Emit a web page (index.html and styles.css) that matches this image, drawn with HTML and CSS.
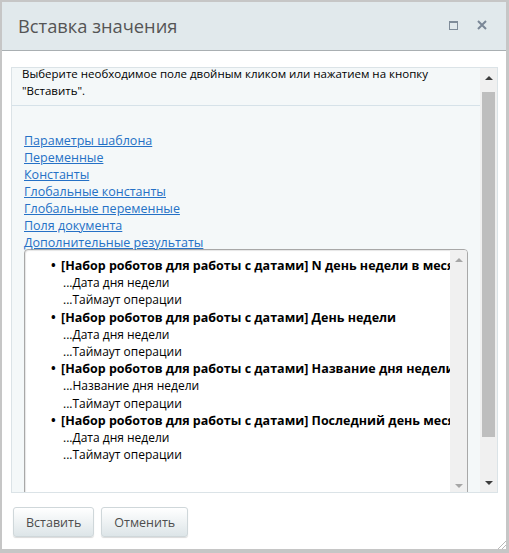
FILE: index.html
```html
<!DOCTYPE html>
<html lang="ru">
<head>
    <meta charset="UTF-8">
    <title>Вставка значения</title>
    <link rel="stylesheet" href="styles.css">
</head>
<body>
    <div class="dialog">
        <div class="dialog-head">
            <span class="dialog-title">Вставка значения</span>
            <span class="head-icons">
                <span class="icon-max"></span>
                <svg class="icon-close" width="10" height="10" viewBox="0 0 10 10">
                    <path d="M1 1 L9 9 M9 1 L1 9" stroke="#7a8797" stroke-width="2"/>
                </svg>
            </span>
        </div>

        <div class="dialog-body">
            <div class="panel">
                <div class="panel-content">
                    <div class="hint">Выберите необходимое поле двойным кликом или нажатием на кнопку "Вставить".</div>

                    <div class="links">
                        <a href="#">Параметры шаблона</a>
                        <a href="#">Переменные</a>
                        <a href="#">Константы</a>
                        <a href="#">Глобальные константы</a>
                        <a href="#">Глобальные переменные</a>
                        <a href="#">Поля документа</a>
                        <a href="#">Дополнительные результаты</a>
                    </div>

                    <div class="field-box">
                        <ul class="field-list">
                            <li>
                                <div class="group">[Набор роботов для работы с датами] N день недели в месяце</div>
                                <div class="field">...Дата дня недели</div>
                                <div class="field">...Таймаут операции</div>
                            </li>
                            <li>
                                <div class="group">[Набор роботов для работы с датами] День недели</div>
                                <div class="field">...Дата дня недели</div>
                                <div class="field">...Таймаут операции</div>
                            </li>
                            <li>
                                <div class="group">[Набор роботов для работы с датами] Название дня недели</div>
                                <div class="field">...Название дня недели</div>
                                <div class="field">...Таймаут операции</div>
                            </li>
                            <li>
                                <div class="group">[Набор роботов для работы с датами] Последний день месяца</div>
                                <div class="field">...Дата дня недели</div>
                                <div class="field">...Таймаут операции</div>
                            </li>
                        </ul>
                        <div class="scrollbar light">
                            <span class="arrow up"></span>
                            <span class="arrow down"></span>
                        </div>
                    </div>
                </div>
                <div class="scrollbar">
                    <span class="arrow up"></span>
                    <span class="thumb"></span>
                    <span class="arrow down"></span>
                </div>
            </div>
        </div>

        <div class="dialog-foot">
            <button class="btn">Вставить</button>
            <button class="btn">Отменить</button>
            <span class="grip"></span>
        </div>
    </div>
</body>
</html>
```

FILE: styles.css
```css
body {
    margin: 0;
    background-color: #c6c6c6;
    font-family: "Open Sans", "Noto Sans", Arial, sans-serif;
    color: #000;
}
.dialog {
    margin: 2px;
    width: 504px;
    height: 547px;
    background-color: #fff;
    display: flex;
    flex-direction: column;
    position: relative;
}
.dialog-head {
    height: 48px;
    background-color: #e1e9ec;
    border-bottom: 1px solid #a9afb2;
    display: flex;
    align-items: center;
    justify-content: space-between;
    padding: 0 19px 0 16px;
}
.dialog-title {
    font-size: 18.3px;
    color: #555;
    margin-top: -2px;
}
.head-icons {
    display: flex;
    align-items: center;
    gap: 19px;
    margin-top: -2px;
}
.icon-max {
    width: 7px;
    height: 6px;
    border: 1px solid #7f8c99;
    border-top-width: 2px;
}
.icon-close {
    display: block;
}
.dialog-body {
    padding: 16px 8px 0 9px;
}
.panel {
    height: 424px;
    border: 1px solid #dbe3e7;
    background-color: #f4f8f9;
    display: flex;
    overflow: hidden;
}
.panel-content {
    flex: 1;
    min-width: 0;
}
.hint {
    font-size: 11.5px;
    line-height: 17px;
    margin-top: -3px;
    padding: 0 10px 6px 10px;
    border-bottom: 1px solid #d6e2e9;
}
.links {
    padding: 26px 0 0 12px;
    display: flex;
    flex-direction: column;
    align-items: flex-start;
}
.links a {
    font-size: 12.5px;
    line-height: 17px;
    color: #2571c6;
}
.field-box {
    margin: -2px 0 0 12px;
    width: 442px;
    height: 245px;
    border: 1px solid #a8a8a8;
    border-radius: 4px;
    background-color: #fff;
    display: flex;
    overflow: hidden;
    box-shadow: inset 1px 1px 1px rgba(0, 0, 0, 0.1);
}
.field-list {
    flex: 1;
    min-width: 0;
    margin: 0;
    padding: 7px 0 0 36px;
    list-style: none;
    white-space: nowrap;
    overflow: hidden;
}
.field-list li {
    line-height: 17.2px;
}
.group {
    font-size: 12.5px;
    font-weight: bold;
    position: relative;
}
.group::before {
    content: "•";
    position: absolute;
    left: -10px;
    font-weight: bold;
}
.field {
    font-size: 12px;
    padding-left: 2px;
}
.scrollbar {
    width: 17px;
    background-color: #f0f0f0;
    display: flex;
    flex-direction: column;
    align-items: center;
    flex-shrink: 0;
}
.arrow {
    width: 0;
    height: 0;
    border-left: 4px solid transparent;
    border-right: 4px solid transparent;
}
.arrow.up {
    border-bottom: 4px solid #3c3c3c;
    margin-top: 8px;
}
.arrow.down {
    border-top: 4px solid #3c3c3c;
    margin-top: auto;
    margin-bottom: 7px;
}
.light .arrow.up {
    border-bottom-color: #a6a6a6;
}
.light .arrow.down {
    border-top-color: #a6a6a6;
}
.thumb {
    width: 13px;
    height: 345px;
    background-color: #bebebe;
    margin-top: 12px;
}
.dialog-foot {
    padding: 14px 0 0 11px;
    display: flex;
    gap: 7px;
}
.btn {
    height: 30px;
    padding: 0 12px;
    font-family: inherit;
    font-size: 12.5px;
    color: #4d4d4d;
    border: 1px solid #cfd7da;
    border-radius: 3px;
    background: linear-gradient(#ffffff, #dde5e8);
    box-shadow: 0 1px 1px rgba(0, 0, 0, 0.15);
    cursor: pointer;
}
.grip {
    position: absolute;
    right: 0;
    bottom: 0;
    width: 10px;
    height: 10px;
    background: repeating-linear-gradient(135deg, transparent 0 2px, #b9b9b9 2px 3px);
    clip-path: polygon(100% 0, 100% 100%, 0 100%);
}
```
